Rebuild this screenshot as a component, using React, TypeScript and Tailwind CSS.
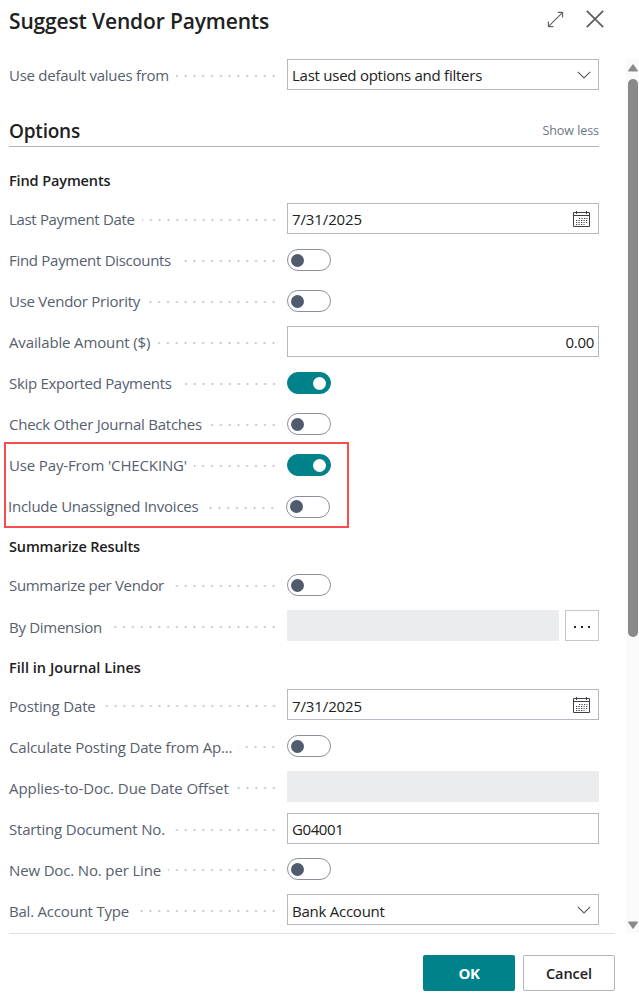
import { ReactNode, useState } from "react";

function ExpandIcon() {
  return (
    <svg width="17" height="17" viewBox="0 0 17 17" fill="none" stroke="#666" strokeWidth="1.2">
      <path d="M1.6 15.4 15.4 1.6M10.6 1.4h5v5M1.4 10.6v5h5" />
    </svg>
  );
}

function CloseIcon() {
  return (
    <svg width="18" height="18" viewBox="0 0 18 18" fill="none" stroke="#5c5c5c" strokeWidth="1.7">
      <path d="M.8.8l16.4 16.4M17.2.8.8 17.2" />
    </svg>
  );
}

function ChevronIcon() {
  return (
    <svg width="14" height="8" viewBox="0 0 14 8" fill="none" stroke="#555b66" strokeWidth="1.1">
      <path d="M.8.8 7 7l6.2-6.2" />
    </svg>
  );
}

function CalendarIcon() {
  return (
    <svg width="17" height="16" viewBox="0 0 17 16" fill="none" stroke="#3f3f46">
      <path d="M.5 1.5h16v14H.5zM.5 4.5h16" />
      <path d="M3.5 0v3M13.5 0v3" />
      <path d="M6 7.5h8.5M3 9.5h11.5M3 11.5h11.5M3 13.5h8.5" strokeDasharray="1.2 1.3" />
    </svg>
  );
}

function Label({ text, tracking, low }: { text: string; tracking: string; low: boolean }) {
  return (
    <div className="flex w-[270px] shrink-0 items-center">
      <span
        className={`whitespace-nowrap text-[15px] leading-5 text-[#56606e] ${tracking} ${
          low ? "pt-0.5" : ""
        }`}
      >
        {text}
      </span>
      <span className="ml-[7px] mr-px mt-[3px] h-1 flex-1 bg-[radial-gradient(circle,#bcc1c7_0.9px,transparent_1.2px)] bg-[length:8.8px_4px] bg-right bg-repeat-x" />
    </div>
  );
}

function Row({
  label,
  tracking,
  low = false,
  className = "",
  children,
}: {
  label: string;
  tracking: string;
  low?: boolean;
  className?: string;
  children: ReactNode;
}) {
  return (
    <div className={`flex h-[41px] items-center gap-2 ${className}`}>
      <Label text={label} tracking={tracking} low={low} />
      {children}
    </div>
  );
}

function Toggle({ initial = false }: { initial?: boolean }) {
  const [on, setOn] = useState(initial);

  return (
    <button
      type="button"
      role="switch"
      aria-checked={on}
      onClick={() => setOn(!on)}
      className={`mt-px flex h-[22px] w-11 items-center rounded-full border ${
        on
          ? "justify-end border-[#00828a] bg-[#00828a] pr-1"
          : "justify-start border-[#8a919e] bg-white pl-[3px]"
      }`}
    >
      <span className={`size-[13px] rounded-full ${on ? "bg-white" : "bg-[#505c6d]"}`} />
    </button>
  );
}

function Field({
  value,
  tracking = "tracking-[-0.12px]",
  icon,
  low = false,
  alignRight = false,
}: {
  value: string;
  tracking?: string;
  icon?: ReactNode;
  low?: boolean;
  alignRight?: boolean;
}) {
  return (
    <div className="flex h-[31px] w-[312px] items-center border border-[#b3b8c2] bg-white px-1">
      <span
        className={`flex-1 whitespace-nowrap text-[15px] leading-5 text-[#212121] ${tracking} ${
          low ? "pt-0.5" : ""
        } ${alignRight ? "text-right" : ""}`}
      >
        {value}
      </span>
      {icon}
    </div>
  );
}

function SectionTitle({ text, className }: { text: string; className: string }) {
  return (
    <h3 className={`flex items-center text-[14.5px] font-semibold leading-5 text-[#212121] ${className}`}>
      {text}
    </h3>
  );
}

const calendar = (
  <span className="mr-1 mt-px">
    <CalendarIcon />
  </span>
);

const chevron = (
  <span className="mr-[3px] mt-px">
    <ChevronIcon />
  </span>
);

export default function App() {
  return (
    <div className="flex h-[1000px] w-[639px] flex-col overflow-hidden bg-white font-['Open_Sans',sans-serif]">
      <header className="flex h-[59px] items-start justify-between pl-[9px] pr-[35px] pt-[6px]">
        <h1 className="text-[21px] font-semibold leading-[30px] tracking-[-0.15px] text-[#212121]">
          Suggest Vendor Payments
        </h1>
        <div className="flex items-center gap-[22px] pt-1">
          <ExpandIcon />
          <CloseIcon />
        </div>
      </header>

      <div className="flex h-[874px]">
        <main className="w-[617px] pl-[9px]">
          <Row label="Use default values from" tracking="tracking-[-0.26px]" className="-mt-[5px]">
            <Field
              value="Last used options and filters"
              tracking="tracking-[-0.25px]"
              icon={chevron}
            />
          </Row>

          <div className="mt-[21px] flex h-[31px] w-[590px] items-center justify-between border-b border-[#aeb5bd]">
            <h2 className="text-[19px] font-semibold leading-6 tracking-[-0.22px] text-[#212121]">
              Options
            </h2>
            <span className="pt-px text-[12.5px] tracking-[-0.06px] text-[#6b7483]">Show less</span>
          </div>

          <SectionTitle text="Find Payments" className="h-[51px] pt-[17px] tracking-[-0.12px]" />
          <Row label="Last Payment Date" tracking="tracking-[-0.33px]">
            <Field value="7/31/2025" icon={calendar} />
          </Row>
          <Row label="Find Payment Discounts" tracking="tracking-[-0.29px]">
            <Toggle />
          </Row>
          <Row label="Use Vendor Priority" tracking="tracking-[-0.26px]">
            <Toggle />
          </Row>
          <Row label="Available Amount ($)" tracking="tracking-[-0.14px]">
            <Field value="0.00" tracking="tracking-[-0.29px]" alignRight />
          </Row>
          <Row label="Skip Exported Payments" tracking="tracking-[-0.3px]">
            <Toggle initial />
          </Row>
          <Row label="Check Other Journal Batches" tracking="tracking-[-0.25px]">
            <Toggle />
          </Row>

          <div className="relative">
            <Row label="Use Pay-From 'CHECKING'" tracking="tracking-[-0.14px]">
              <Toggle initial />
            </Row>
            <Row
              label="Include Unassigned Invoices"
              tracking="tracking-[-0.24px]"
              className="-ml-px h-[42px]"
            >
              <Toggle />
            </Row>
            {/* highlight frame around the two pay-from options */}
            <div className="pointer-events-none absolute -left-[5px] -top-[2px] h-[86px] w-[345px] border-2 border-[#f84d4d]" />
          </div>

          <SectionTitle text="Summarize Results" className="h-[37px] pt-[3px] tracking-[-0.14px]" />
          <Row label="Summarize per Vendor" tracking="tracking-[-0.32px]">
            <Toggle />
          </Row>
          <Row label="By Dimension" tracking="tracking-[-0.29px]" low>
            <div className="flex gap-1.5">
              <div className="h-[31px] w-[272px] bg-[#ebecee]" />
              <button
                type="button"
                className="flex h-[31px] w-[34px] items-center justify-center gap-[5px] border border-[#c4c7cc] bg-white pt-[3px]"
              >
                <span className="size-0.5 bg-[#212121]" />
                <span className="size-0.5 bg-[#212121]" />
                <span className="size-0.5 bg-[#212121]" />
              </button>
            </div>
          </Row>

          <SectionTitle text="Fill in Journal Lines" className="h-[38px] pt-[5px] tracking-[0.03px]" />
          <Row label="Posting Date" tracking="tracking-[-0.16px]" low>
            <Field value="7/31/2025" icon={calendar} low />
          </Row>
          <Row label="Calculate Posting Date from Ap..." tracking="tracking-[-0.16px]" low>
            <Toggle />
          </Row>
          <Row label="Applies-to-Doc. Due Date Offset" tracking="tracking-[-0.07px]" low>
            <div className="h-[31px] w-[312px] bg-[#ebecee]" />
          </Row>
          <Row label="Starting Document No." tracking="tracking-[-0.18px]" className="pt-0.5">
            <Field value="G04001" tracking="tracking-[-0.4px]" />
          </Row>
          <Row label="New Doc. No. per Line" tracking="tracking-[-0.15px]" low>
            <Toggle />
          </Row>
          <Row label="Bal. Account Type" tracking="tracking-[-0.21px]" low>
            <Field value="Bank Account" tracking="tracking-[-0.25px]" icon={chevron} low />
          </Row>
        </main>

        <div className="ml-[9px] flex w-[13px] flex-col items-end bg-[#fafafa] pb-1 pr-px pt-[5px]">
          <svg width="10" height="8" viewBox="0 0 10 8" fill="#8a8a8a">
            <path d="M4.5.6q.5-.6 1 0l4.3 6q.4 1-.5 1H.7q-.9 0-.5-1z" />
          </svg>
          <div className="mt-[7px] h-[558px] w-2.5 rounded-full bg-[#8a8a8a]" />
          <svg className="mt-auto" width="10" height="8" viewBox="0 0 10 8" fill="#8a8a8a">
            <path d="M4.5 7.4q.5.6 1 0l4.3-6q.4-1-.5-1H.7q-.9 0-.5 1z" />
          </svg>
        </div>
      </div>

      <footer className="ml-[9px] flex h-[67px] w-[606px] justify-end gap-2 border-t border-[#dcdee2] pt-[21px]">
        <button
          type="button"
          className="h-9 w-[92px] rounded-[2px] bg-[#00828a] pt-px text-[15px] font-bold tracking-[-0.45px] text-white"
        >
          OK
        </button>
        <button
          type="button"
          className="h-9 w-[92px] rounded-[2px] border border-[#b3b5b9] bg-white pt-px text-[14.5px] font-semibold tracking-[-0.07px] text-[#212121]"
        >
          Cancel
        </button>
      </footer>
    </div>
  );
}
